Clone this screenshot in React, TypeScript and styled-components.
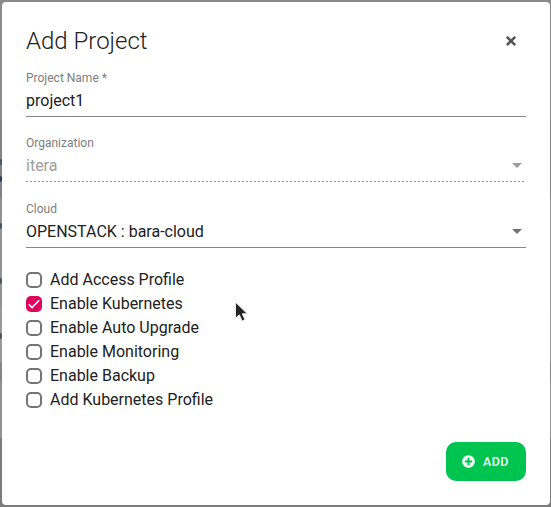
import React, { useState } from "react";
import styled, { createGlobalStyle } from "styled-components";
import { FaTimes, FaPlusCircle } from "react-icons/fa";

const GlobalStyle = createGlobalStyle`
  *, *::before, *::after { box-sizing: border-box; }
  body { margin: 0; overflow: hidden; font-family: Roboto, "Liberation Sans", sans-serif; }
`;

const Backdrop = styled.div`
  position: relative;
  width: 551px;
  height: 507px;
  padding: 2px 1px 2px 2px;
  overflow: hidden;
  background: linear-gradient(
    #8a8a8a 0 120px, #828282 120px 198px, #929292 198px 308px,
    #999 308px 362px, #858585 362px 382px, #929292 382px 438px, #7b7b7b 438px
  );
`;

const PageMark = styled.span<{ $top: number; $color?: string }>`
  position: absolute;
  left: 0;
  top: ${(p) => p.$top}px;
  width: 2px;
  height: 6px;
  border-radius: 0 2px 2px 0;
  background: ${(p) => p.$color ?? "#4a5560"};
`;

const Dialog = styled.form`
  position: relative;
  display: flex;
  flex-direction: column;
  height: 503px;
  padding: 24px;
  border-radius: 4px;
  background: #fff;
  color: #212121;
`;

const Header = styled.header`
  display: flex;
  align-items: center;
  justify-content: space-between;
  height: 30px;
`;

const Title = styled.h2`
  margin: 0;
  font-size: 24px;
  line-height: 30px;
  font-weight: 300;
`;

const CloseButton = styled.button`
  display: grid;
  place-items: center;
  width: 30px;
  height: 30px;
  padding: 0;
  border: 0;
  background: none;
  color: #545655;
`;

const Field = styled.div<{ $gap: number; $disabled?: boolean }>`
  display: flex;
  flex-direction: column;
  margin-top: ${(p) => p.$gap}px;
  color: ${(p) => (p.$disabled ? "#9e9e9e" : "#212121")};
`;

const FieldLabel = styled.span`
  font-size: 12px;
  line-height: 14px;
  color: #7d7d7d;
`;

const Control = styled.div<{ $dotted?: boolean }>`
  display: flex;
  align-items: center;
  justify-content: space-between;
  height: 32px;
  padding-right: 4px;
  border-bottom: 1px solid #858585;
  ${(p) =>
    p.$dotted &&
    `border-bottom-color: transparent;
     background: repeating-linear-gradient(90deg, #929292 0 2px, transparent 2px 4px) bottom left / 100% 1px no-repeat border-box;`}
  font-size: 16px;
  line-height: 24px;
`;

const Caret = styled.svg<{ $disabled?: boolean }>`
  width: 10px;
  height: 5px;
  fill: ${(p) => (p.$disabled ? "#9b9b9b" : "#727272")};
`;

const Options = styled.div`
  display: flex;
  flex-direction: column;
  margin-top: 20px;
`;

const Option = styled.label`
  display: flex;
  align-items: center;
  gap: 8px;
  height: 24px;
  font-size: 16px;
  line-height: 24px;
`;

const CheckInput = styled.input`
  position: absolute;
  opacity: 0;
  width: 0;
  height: 0;
  margin: 0;
`;

const CheckBox = styled.span<{ $checked: boolean }>`
  display: grid;
  place-items: center;
  width: 16px;
  height: 16px;
  border: ${(p) => (p.$checked ? "0" : "2px solid #757575")};
  border-radius: 5px;
  background: ${(p) => (p.$checked ? "#e0005f" : "#fff")};
`;

const Footer = styled.footer`
  display: flex;
  justify-content: flex-end;
  margin-top: auto;
`;

const AddButton = styled.button`
  display: flex;
  align-items: center;
  gap: 8px;
  width: 80px;
  height: 39px;
  padding: 0 0 0 16px;
  border: 0;
  border-radius: 10px;
  background: #00c450;
  color: #f4fff7;
  font: 500 12.5px/16px Roboto, "Liberation Sans", sans-serif;
  letter-spacing: 0.4px;
`;

const Pointer = styled.svg`
  position: absolute;
  left: 234px;
  top: 300px;
  pointer-events: none;
`;

const names = [
  "Add Access Profile",
  "Enable Kubernetes",
  "Enable Auto Upgrade",
  "Enable Monitoring",
  "Enable Backup",
  "Add Kubernetes Profile",
];

function DropCaret({ disabled }: { disabled?: boolean }) {
  return (
    <Caret viewBox="0 0 10 5" $disabled={disabled}>
      <path d="M0 0h10L5 5z" />
    </Caret>
  );
}

export default function App() {
  const [selected, setSelected] = useState(["Enable Kubernetes"]);
  const toggle = (name: string) =>
    setSelected((s) => (s.includes(name) ? s.filter((n) => n !== name) : [...s, name]));

  return (
    <Backdrop>
      <GlobalStyle />
      <PageMark $top={159} />
      <PageMark $top={176} $color="#253f59" />
      <PageMark $top={223} />
      <PageMark $top={278} />
      <PageMark $top={333} />
      <Dialog onSubmit={(e) => e.preventDefault()}>
        <Header>
          <Title>Add Project</Title>
          <CloseButton type="button" aria-label="Close">
            <FaTimes size={14} />
          </CloseButton>
        </Header>
        <Field $gap={15}>
          <FieldLabel>Project Name *</FieldLabel>
          <Control>project1</Control>
        </Field>
        <Field $gap={19} $disabled>
          <FieldLabel>Organization</FieldLabel>
          <Control $dotted>
            itera
            <DropCaret disabled />
          </Control>
        </Field>
        <Field $gap={20}>
          <FieldLabel>Cloud</FieldLabel>
          <Control>
            OPENSTACK : bara-cloud
            <DropCaret />
          </Control>
        </Field>
        <Options>
          {names.map((name) => {
            const checked = selected.includes(name);
            return (
              <Option key={name}>
                <CheckInput type="checkbox" checked={checked} onChange={() => toggle(name)} />
                <CheckBox $checked={checked}>
                  {checked && (
                    <svg width="16" height="16" viewBox="0 0 16 16" fill="none">
                      <path d="M2.8 8.3 6.1 11.6 13.2 4.3" stroke="#fff" strokeWidth="1.5" />
                    </svg>
                  )}
                </CheckBox>
                {name}
              </Option>
            );
          })}
        </Options>
        <Footer>
          <AddButton type="submit">
            <FaPlusCircle size={13} />
            ADD
          </AddButton>
        </Footer>
      </Dialog>
      <Pointer width="16" height="24" viewBox="0 0 16 24">
        <path
          d="M1.5 2.2v16l3.8-3.4 2.7 6.2 3-1.3-2.7-5.9h5.1z"
          fill="#242424"
          stroke="#ececec"
          strokeWidth="1"
          strokeLinejoin="round"
        />
      </Pointer>
    </Backdrop>
  );
}
